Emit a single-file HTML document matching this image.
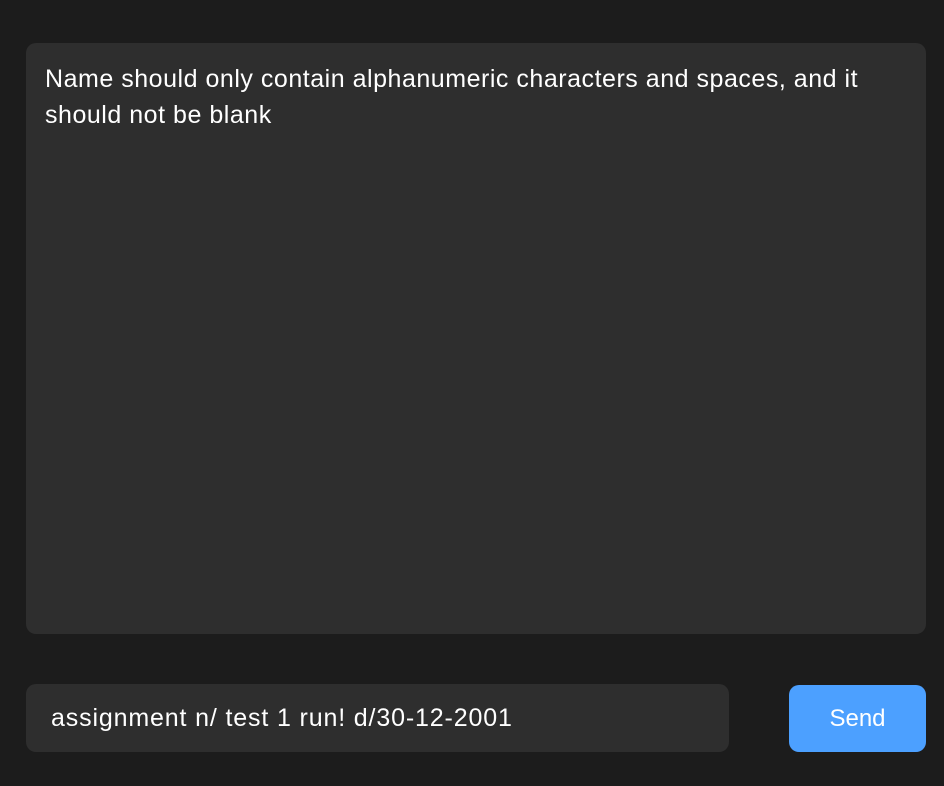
<!DOCTYPE html>
<html><head><style>
html,body{margin:0;padding:0;background:#1c1c1c;width:944px;height:786px;overflow:hidden;font-family:"Liberation Sans",sans-serif;color:#fff}
.panel{position:absolute;left:26px;top:43px;width:900px;height:591px;background:#2e2e2e;border-radius:10px}
.msg{position:absolute;left:45px;top:61px;width:840px;font-size:25px;line-height:36px;letter-spacing:0.52px}
.input{position:absolute;left:26px;top:684px;width:703px;height:68px;background:#2e2e2e;border-radius:10px}
.itext{position:absolute;left:51px;top:702px;font-size:25px;line-height:32px;letter-spacing:0.85px}
.btn{position:absolute;left:789px;top:685px;width:137px;height:67px;background:#4ca0ff;border-radius:10px;font-size:24px;line-height:67px;text-align:center;letter-spacing:0}
</style></head><body>
<div class="panel"></div>
<div class="msg">Name should only contain alphanumeric characters and spaces, and it should not be blank</div>
<div class="input"></div>
<div class="itext">assignment n/ test 1 run! d/30-12-2001</div>
<div class="btn">Send</div>
</body></html>
